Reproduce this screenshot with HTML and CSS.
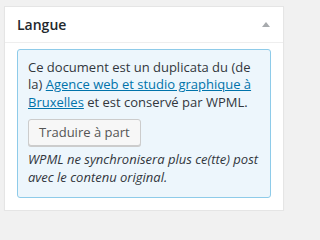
FILE: index.html
```html
<!DOCTYPE html>
<html lang="fr">
<head>
<meta charset="utf-8">
<title>Langue</title>
<link rel="stylesheet" href="styles.css">
</head>
<body>
<div class="postbox">
  <div class="postbox-header">
    <h2 class="hndle">Langue</h2>
    <svg class="toggle" width="8" height="5" viewBox="0 0 8 5" aria-hidden="true"><polygon points="4,0 8,5 0,5" fill="#a7aaad"/></svg>
  </div>
  <div class="inside">
    <div class="notice">
      <div class="msg"><span>Ce document est un duplicata du (de</span> <span>la)</span> <a href="#">Agence web et studio graphique à</a> <a href="#">Bruxelles</a> et est conservé par WPML.</div>
      <button class="button" type="button">Traduire à part</button>
      <div class="note">WPML ne synchronisera plus ce(tte) post avec le contenu original.</div>
    </div>
  </div>
</div>
</body>
</html>
```

FILE: styles.css
```css
html, body {
  margin: 0;
  background: #f1f1f1;
}
body {
  padding: 6px 0 0 4px;
  font-family: "Open Sans", "Noto Sans", sans-serif;
  font-size: 13px;
  line-height: 17.8px;
  color: #32373c;
}
.postbox {
  width: 278px;
  background: #fff;
  border: 1px solid #e5e5e5;
  box-shadow: 0 1px 1px rgba(0,0,0,0.04);
}
.postbox-header {
  display: flex;
  align-items: center;
  justify-content: space-between;
  border-bottom: 1px solid #eee;
  padding: 8px 13px 7px 12px;
}
.hndle {
  margin: 0;
  font-size: 14px;
  font-weight: 600;
  line-height: 19.6px;
  color: #23282d;
}
.toggle {
  display: block;
}
.inside {
  padding: 0 12px 12px;
  margin-top: 6px;
}
.notice {
  background: #edf6fc;
  border: 1px solid #8ecbe9;
  border-radius: 3px;
  padding: 9px 10px 10px 10px;
}
.msg a {
  color: #0073aa;
  text-decoration: underline;
}
.button {
  display: block;
  margin: 7px 0 5px;
  height: 27px;
  padding: 0 10px;
  font-family: inherit;
  font-size: 13px;
  line-height: 25px;
  color: #555;
  background: #f7f7f7;
  border: 1px solid #ccc;
  border-radius: 3px;
  box-shadow: 0 1px 0 #ccc;
}
.note {
  font-style: italic;
}
```
